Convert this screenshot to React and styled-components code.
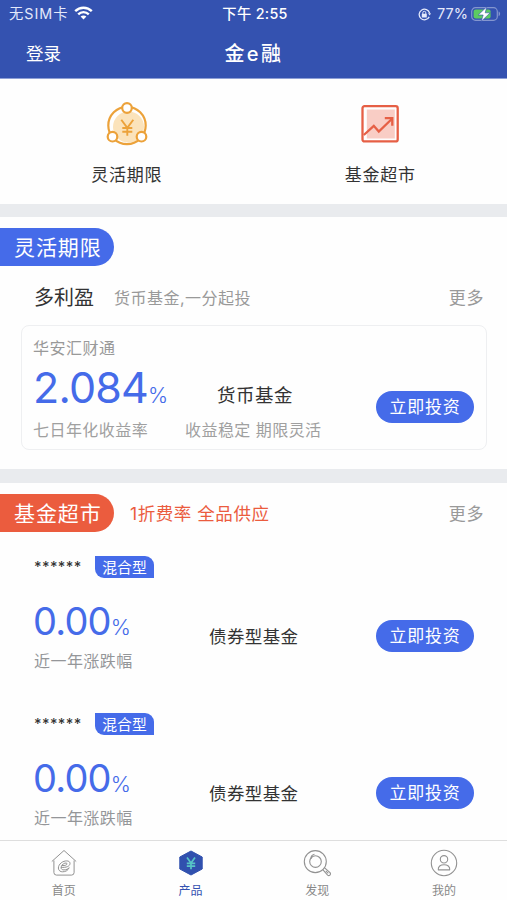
import React from 'react';
import styled, { createGlobalStyle } from 'styled-components';

const funds = [
  { id: 1, name: '******', tag: '混合型', rate: '0.00', period: '近一年涨跌幅', type: '债券型基金' },
  { id: 2, name: '******', tag: '混合型', rate: '0.00', period: '近一年涨跌幅', type: '债券型基金' },
];

function WifiIcon() {
  return (
    <svg width="19" height="14" viewBox="0 0 19 14" fill="none" stroke="#fff" strokeWidth="2.4">
      <path d="M1.2 5.2C5.8 0.6 13.2 0.6 17.8 5.2" />
      <path d="M4.2 8.3C7.2 5.4 11.8 5.4 14.8 8.3" />
      <path d="M9.5 13.4L6.6 10.5C8.2 9 10.8 9 12.4 10.5Z" fill="#fff" stroke="none" />
    </svg>
  );
}

function RotationLockIcon() {
  return (
    <svg width="13" height="13" viewBox="0 0 13 13" fill="none" stroke="#e4e9fb">
      <path d="M11.6 5.2A5.3 5.3 0 1 0 11.2 8.9" strokeWidth="1.3" />
      <path d="M10 5.3h3l-1.3 2.2z" fill="#e4e9fb" stroke="none" />
      <rect x="3.8" y="5.8" width="5" height="3.8" rx="0.6" fill="#e4e9fb" stroke="none" />
      <path d="M4.8 6V4.8a1.5 1.5 0 0 1 3 0V6" strokeWidth="1" />
    </svg>
  );
}

function BatteryIcon() {
  return (
    <svg width="30" height="16" viewBox="0 0 30 16">
      <rect x="0.7" y="1.7" width="25.6" height="12.6" rx="3.8" fill="none" stroke="#8496cf" strokeWidth="1.2" />
      <rect x="2.6" y="3.6" width="17" height="8.8" rx="2" fill="#5ccb62" />
      <path d="M27.6 5.6c2 .7 2 4 0 4.7z" fill="#8496cf" />
      <path d="M15.8 0.8L7.2 9h5l-2 6.4 9-8.6h-5z" fill="#fff" stroke="#3452b0" strokeWidth="0.6" />
    </svg>
  );
}

function FlexIcon() {
  return (
    <svg width="42" height="44" viewBox="0 0 42 44" fill="none" stroke="#eca23a">
      <circle cx="22.5" cy="25" r="15.5" fill="#fbe3bb" stroke="none" />
      <circle cx="21" cy="23.5" r="18.7" strokeWidth="2.2" />
      <circle cx="21" cy="6" r="4.8" fill="#fff" strokeWidth="2.2" />
      <circle cx="6.5" cy="34.7" r="4.8" fill="#fff" strokeWidth="2.2" />
      <circle cx="35.5" cy="34.7" r="4.8" fill="#fff" strokeWidth="2.2" />
      <path d="M15.3 17.8l6 8 6-8M21.3 25.8v8M16.3 26h10M16.3 29.8h10" strokeWidth="1.9" />
    </svg>
  );
}

function MarketIcon() {
  return (
    <svg width="38" height="38" viewBox="0 0 38 38" fill="none" stroke="#e65f45">
      <rect x="1.5" y="1.2" width="35.2" height="35.2" rx="2" strokeWidth="2.3" />
      <rect x="5.8" y="4.5" width="28" height="29" fill="#f9cdc5" stroke="none" />
      <path d="M2.8 30L12.8 20.8 17.8 26.5 31.3 13.5" strokeWidth="2.3" />
      <path d="M23.8 13.2H31.3V20.8" strokeWidth="2.3" />
    </svg>
  );
}

function HomeIcon() {
  return (
    <svg width="28" height="28" viewBox="0 0 28 28" fill="none" stroke="#929292" strokeWidth="1">
      <path d="M1.8 12.5L14 1.5 26.2 12.5" />
      <path d="M3.9 11.5V23.5a2.6 2.6 0 0 0 2.6 2.6h15a2.6 2.6 0 0 0 2.6-2.6V11.5" />
      <path d="M11.8 16.5c3.400.3 5.200-.5 5.200-1.700 0-1.300-3.400-1-5 1.400-1.800 2.800-.8 4.700 2 4.700 2.300 0 4-.9 5.200-2.200" />
      <path d="M11 18.3c5.200.5 9-1 9-3.900 0-3.500-6.600-3.300-9.900.5-3.200 3.700-1.700 7.900 2.500 7.900 2.900 0 5.300-1.300 6.600-4.100" />
    </svg>
  );
}

function ProductIcon() {
  return (
    <svg width="28" height="28" viewBox="0 0 28 28" fill="none">
      <path d="M14 2L25.2 8v12L14 26 2.8 20V8z" fill="#3050ae" stroke="#3050ae" strokeWidth="1" strokeLinejoin="round" />
      <path d="M10 8.500l4 5.500 4-5.500M14 14v6.200M9.800 14.300h8.400M9.800 17.200h8.400" stroke="#57c4c7" strokeWidth="1.7" />
    </svg>
  );
}

function DiscoverIcon() {
  return (
    <svg width="28" height="28" viewBox="0 0 28 28" fill="none" stroke="#929292" strokeWidth="1.1">
      <circle cx="12.3" cy="12.6" r="11" />
      <circle cx="12.5" cy="12.6" r="5.8" />
      <path d="M8.2 9.8C7.6 7.5 9 5.8 11.5 5.3" />
      <path d="M19.8 20.6l4.800 5.500c1.700 1.300 3.700-.7 2.400-2.400L21.6 18.8" />
      <path d="M22.8 21.8l2.500 2.500" />
    </svg>
  );
}

function MineIcon() {
  return (
    <svg width="28" height="28" viewBox="0 0 28 28" fill="none" stroke="#929292" strokeWidth="1.1">
      <circle cx="14" cy="14" r="12.7" />
      <circle cx="14" cy="10.3" r="3.7" />
      <path d="M8.3 20.9c-.5-3.500 2.300-5.200 5.700-5.200s6.200 1.700 5.700 5.200z" strokeLinejoin="round" />
    </svg>
  );
}

const tabs = [
  { label: '首页', Icon: HomeIcon },
  { label: '产品', Icon: ProductIcon, active: true },
  { label: '发现', Icon: DiscoverIcon },
  { label: '我的', Icon: MineIcon },
];

function FundRow({ fund }) {
  return (
    <FundItem>
      <FundHead>
        <FundName>{fund.name}</FundName>
        <FundTag>{fund.tag}</FundTag>
      </FundHead>
      <FundBody>
        <FundRate>
          <Rate>{fund.rate}<Percent>%</Percent></Rate>
          <Caption>{fund.period}</Caption>
        </FundRate>
        <FundType>{fund.type}</FundType>
        <InvestButton>立即投资</InvestButton>
      </FundBody>
    </FundItem>
  );
}

function App() {
  return (
    <Screen>
      <GlobalStyle />
      <Header>
        <StatusBar>
          <Carrier>无SIM卡 <WifiIcon /></Carrier>
          <Clock>下午 2:55</Clock>
          <Power><RotationLockIcon /><span>77%</span><BatteryIcon /></Power>
        </StatusBar>
        <NavBar>
          <Login>登录</Login>
          <Title>金e融</Title>
        </NavBar>
      </Header>

      <Shortcuts>
        <Shortcut>
          <ShortcutIcon><FlexIcon /></ShortcutIcon>
          <ShortcutLabel>灵活期限</ShortcutLabel>
        </Shortcut>
        <Shortcut>
          <ShortcutIcon><MarketIcon /></ShortcutIcon>
          <ShortcutLabel>基金超市</ShortcutLabel>
        </Shortcut>
      </Shortcuts>

      <FlexSection>
        <Ribbon>灵活期限</Ribbon>
        <SectionHead>
          <ProductName>多利盈</ProductName>
          <Slogan>货币基金,一分起投</Slogan>
          <More>更多</More>
        </SectionHead>
        <Card>
          <CardTitle>华安汇财通</CardTitle>
          <CardBody>
            <CardRate>
              <Rate $large>2.084<Percent>%</Percent></Rate>
              <Caption $light>七日年化收益率</Caption>
            </CardRate>
            <CardInfo>
              <CardType>货币基金</CardType>
              <Caption $light>收益稳定 期限灵活</Caption>
            </CardInfo>
            <InvestButton>立即投资</InvestButton>
          </CardBody>
        </Card>
      </FlexSection>

      <MarketSection>
        <MarketHead>
          <Ribbon $orange>基金超市</Ribbon>
          <Discount>1折费率 全品供应</Discount>
          <More>更多</More>
        </MarketHead>
        {funds.map((fund) => <FundRow key={fund.id} fund={fund} />)}
      </MarketSection>

      <TabBar>
        {tabs.map(({ label, Icon, active }) => (
          <Tab key={label} $active={active}>
            <Icon />
            <span>{label}</span>
          </Tab>
        ))}
      </TabBar>
    </Screen>
  );
}

export default App;

const GlobalStyle = createGlobalStyle`
  * {
    box-sizing: border-box;
  }

  body {
    margin: 0;
    background: #fefefe;
    font-family: Inter, "Noto Sans CJK SC", sans-serif;
    color: #333;
  }

  svg {
    display: block;
    flex: none;
  }
`;

const Screen = styled.div`
  width: 507px;
  height: 900px;
  display: flex;
  flex-direction: column;
  overflow: hidden;
  white-space: nowrap;
  background: #fefefe;
`;

const Header = styled.header`
  height: 79px;
  flex: none;
  background: #3452b0;
  border-bottom: 1px solid #8d9fd6;
  color: #fff;
`;

const StatusBar = styled.div`
  height: 28px;
  display: grid;
  grid-template-columns: 1fr auto 1fr;
  align-items: center;
  padding: 0 6px 0 9px;
  font-size: 14px;
  line-height: 28px;
`;

const Carrier = styled.div`
  display: flex;
  align-items: center;
  gap: 5px;
  color: #e4e9fb;
  font-size: 14.3px;
  letter-spacing: 1px;

  svg {
    margin-top: -2px;
  }
`;

const Clock = styled.div`
  font-weight: 500;
  font-size: 14.3px;
  letter-spacing: 0.3px;
`;

const Power = styled.div`
  display: flex;
  align-items: center;
  justify-content: flex-end;
  color: #e4e9fb;
  font-size: 14.5px;

  span {
    margin: 0 3px 0 6px;
  }
`;

const NavBar = styled.div`
  height: 49px;
  display: grid;
  grid-template-columns: 1fr auto 1fr;
  align-items: center;
  padding: 0 25px 0 26px;
`;

const Login = styled.span`
  font-size: 17.5px;
`;

const Title = styled.h1`
  margin: 0;
  font-size: 20px;
  font-weight: 500;
  letter-spacing: 2.5px;
`;

const Shortcuts = styled.nav`
  height: 125px;
  flex: none;
  display: grid;
  grid-template-columns: 1fr 1fr;
`;

const Shortcut = styled.div`
  display: flex;
  flex-direction: column;
  align-items: center;
  padding-top: 21px;
`;

const ShortcutIcon = styled.div`
  height: 48px;
  display: flex;
  align-items: center;
`;

const ShortcutLabel = styled.span`
  margin-top: 14px;
  font-size: 17px;
  line-height: 26px;
  letter-spacing: 0.7px;
`;

const FlexSection = styled.section`
  height: 265px;
  flex: none;
  border-top: 13px solid #e9ebee;
  padding-top: 11px;
`;

const Ribbon = styled.h2`
  width: 114px;
  height: 38px;
  margin: 0;
  padding-left: 14px;
  border-radius: 0 19px 19px 0;
  background: ${(props) => props.$orange ? '#eb5c3e' : '#456be9'};
  color: #fff;
  font-size: 21px;
  font-weight: 400;
  line-height: 40px;
  letter-spacing: 0.9px;
`;

const SectionHead = styled.div`
  height: 59px;
  display: flex;
  align-items: center;
  padding: 1px 23px 0 34px;
`;

const ProductName = styled.h3`
  margin: 0;
  width: 80px;
  font-size: 20px;
  font-weight: 400;
`;

const Slogan = styled.span`
  padding-top: 2px;
  color: #999;
  font-size: 16px;
  letter-spacing: 0.5px;
`;

const More = styled.span`
  margin-left: auto;
  color: #999;
  font-size: 17px;
  letter-spacing: 0.6px;
`;

const Card = styled.div`
  height: 125px;
  margin: 0 20px 0 21px;
  padding: 10px 12px 0;
  border: 1px solid #eeeff1;
  border-radius: 8px;
`;

const CardTitle = styled.div`
  margin-left: -1px;
  color: #999;
  font-size: 16px;
  line-height: 24px;
  letter-spacing: 0.5px;
`;

const CardBody = styled.div`
  display: grid;
  grid-template-columns: 151px 191px auto;
`;

const CardRate = styled.div`
  margin-left: -1px;
`;

const Rate = styled.div`
  height: ${(props) => props.$large ? '58px' : '55px'};
  margin-left: ${(props) => props.$large ? '0' : '-1px'};
  color: #456be9;
  font-size: ${(props) => props.$large ? '43px' : '38px'};
  line-height: 55px;
  letter-spacing: -0.8px;
`;

const Percent = styled.span`
  font-size: 21.5px;
  font-weight: 350;
  letter-spacing: 0;
`;

const Caption = styled.div`
  color: ${(props) => props.$light ? '#a0a0a0' : '#949699'};
  font-size: 16px;
  line-height: 24px;
  letter-spacing: 0.45px;
`;

const CardInfo = styled.div`
  padding-top: 21px;
`;

const CardType = styled.div`
  height: 37px;
  padding-left: 32px;
  font-size: 18.5px;
  line-height: 28px;
  letter-spacing: 0.5px;
`;

const InvestButton = styled.button`
  width: 98px;
  height: 32px;
  margin: 31px 0 0;
  padding: 1px 0 0;
  border: 0;
  border-radius: 16px;
  background: #456be9;
  color: #fff;
  font-family: inherit;
  font-size: 17px;
  line-height: 31px;
  letter-spacing: 0.7px;
`;

const MarketSection = styled.section`
  height: 371px;
  flex: none;
  border-top: 14px solid #e9ebee;
  padding-top: 11px;
`;

const MarketHead = styled.div`
  display: flex;
  align-items: center;
  padding-right: 23px;

  ${More} {
    margin-top: -2px;
  }
`;

const Discount = styled.span`
  margin: -2px 0 0 16px;
  color: #eb5c3e;
  font-size: 17.5px;
  letter-spacing: 0.55px;
`;

const FundItem = styled.article`
  height: 156.5px;
  padding: 24px 32px 0 34px;
`;

const FundHead = styled.div`
  display: flex;
  height: 22px;
`;

const FundName = styled.span`
  width: 61px;
  font-size: 14.5px;
  font-weight: 500;
  line-height: 22px;
  letter-spacing: 0.4px;
`;

const FundTag = styled.span`
  width: 59px;
  height: 22px;
  border-radius: 0 9px 0 9px;
  background: #456be9;
  color: #fff;
  font-size: 14.8px;
  line-height: 24px;
  text-align: center;
`;

const FundBody = styled.div`
  display: grid;
  grid-template-columns: 175px 167px auto;
  padding-top: 16px;
`;

const FundRate = styled.div``;

const FundType = styled.div`
  padding-top: 29px;
  font-size: 17.5px;
  line-height: 28px;
  letter-spacing: 0.4px;

  & + ${InvestButton} {
    margin-top: 26px;
  }
`;

const TabBar = styled.nav`
  height: 60px;
  flex: none;
  display: grid;
  grid-template-columns: repeat(4, 1fr);
  border-top: 1px solid #dedede;
`;

const Tab = styled.div`
  display: flex;
  flex-direction: column;
  align-items: center;
  padding: 8px 0 0 1px;
  color: ${(props) => props.$active ? '#3452b0' : '#888'};
  font-size: 12px;
  line-height: 18px;

  span {
    margin-top: 5px;
    letter-spacing: 0.2px;
  }
`;
